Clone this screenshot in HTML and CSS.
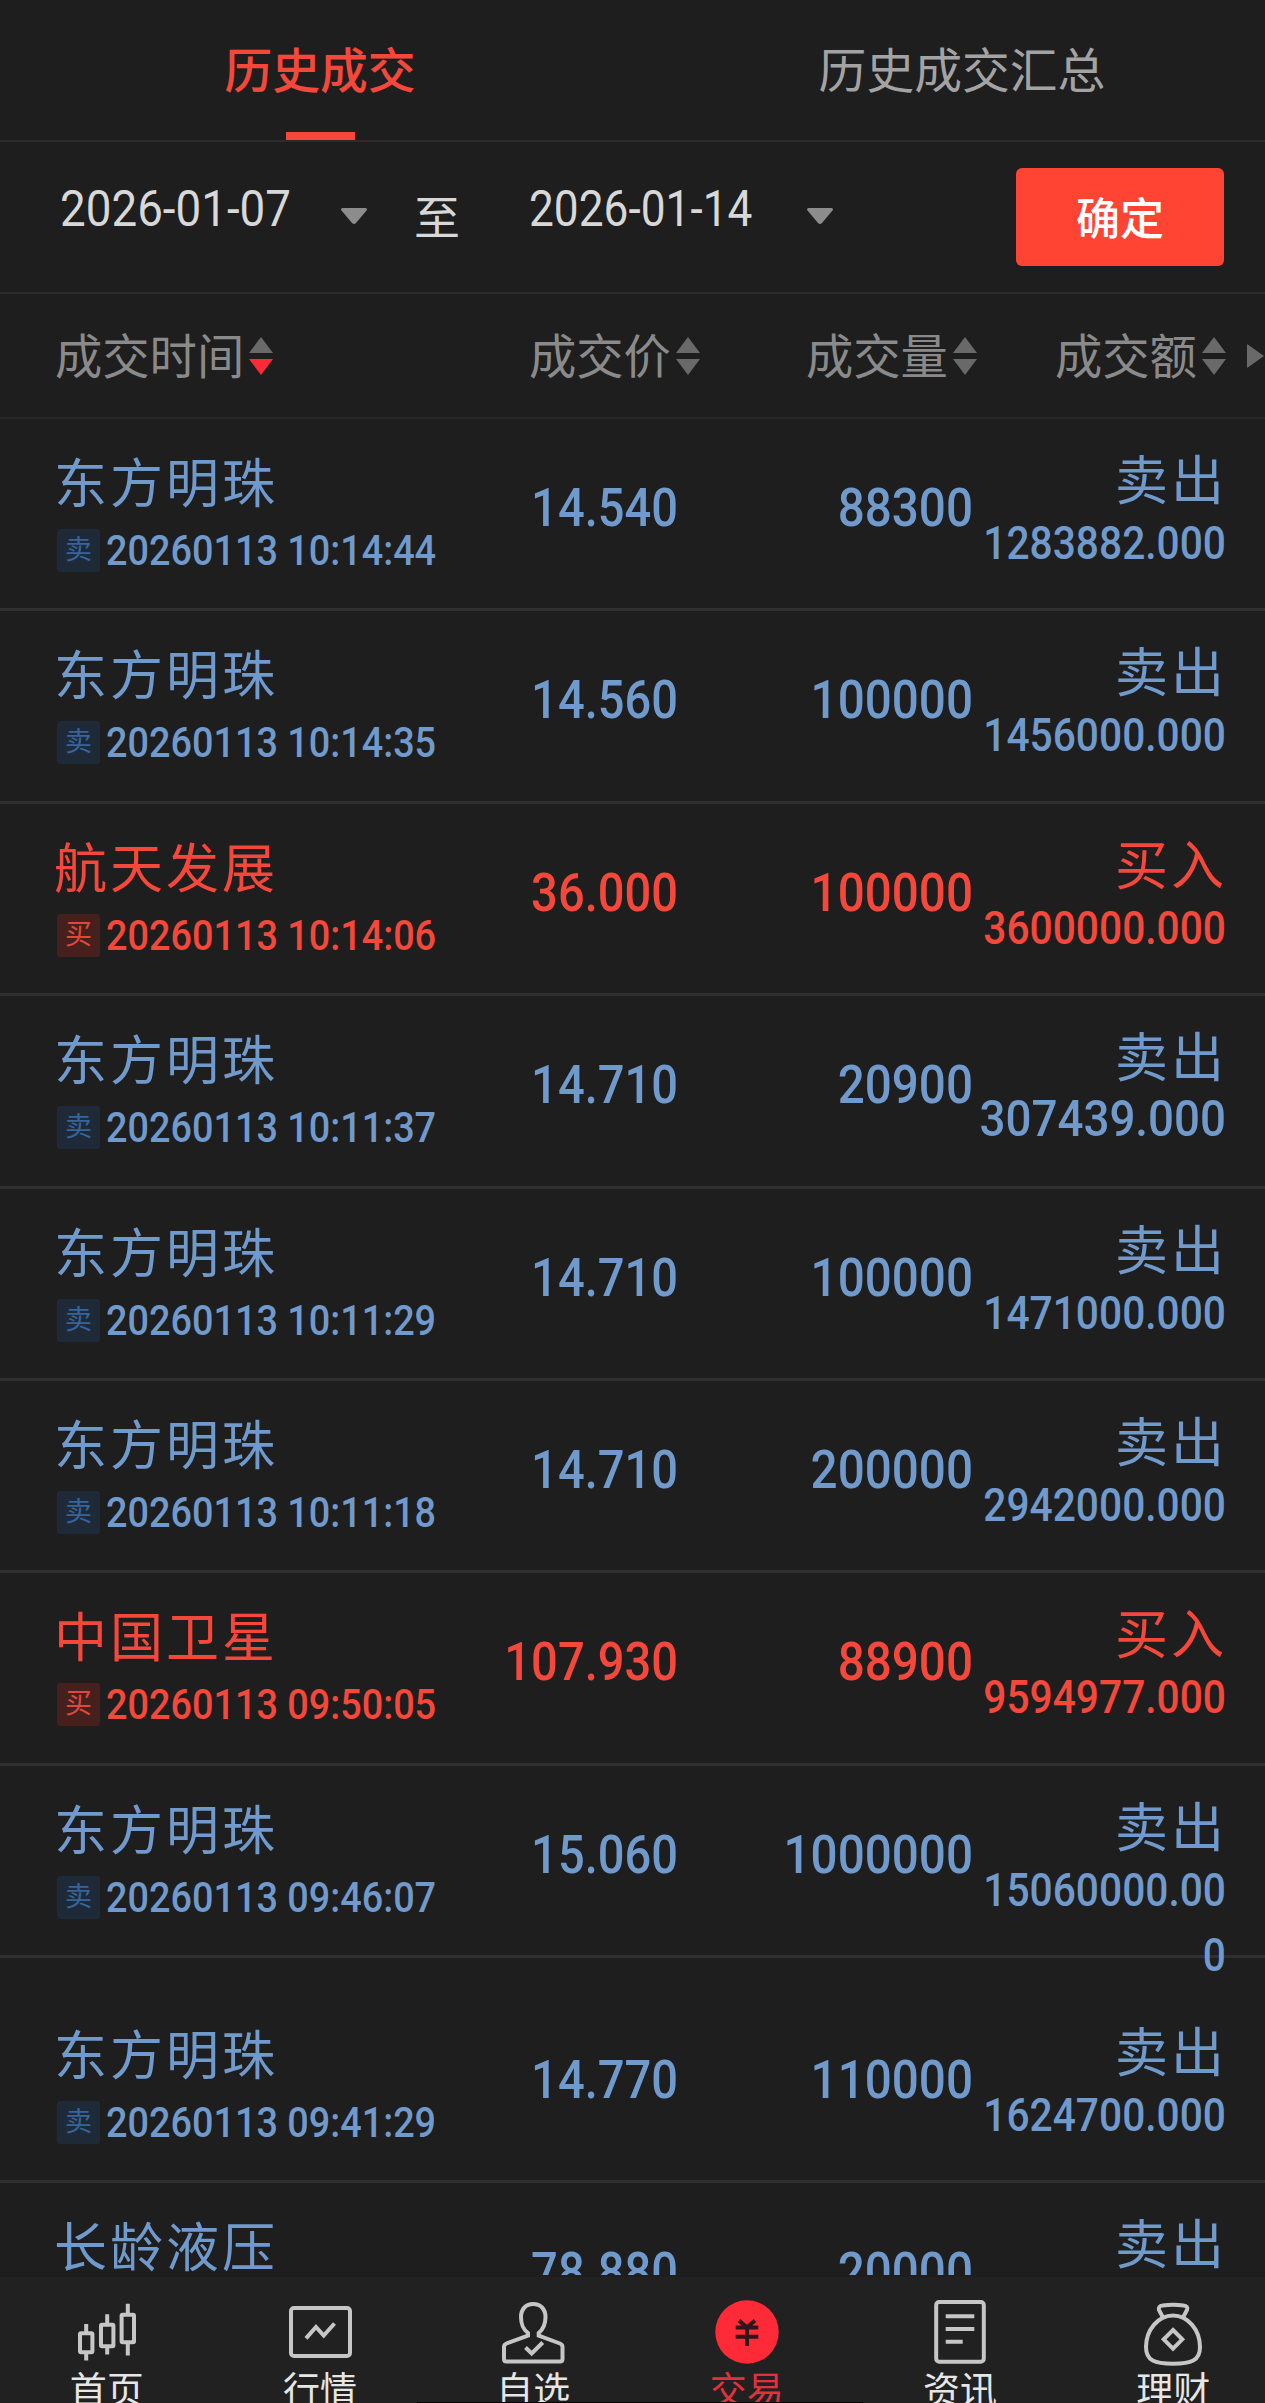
FILE: index.html
```html
<!DOCTYPE html>
<html lang="zh-CN">
  <head>
    <meta charset="utf-8">
    <meta name="viewport" content="width=device-width, initial-scale=1.0">
    <title>历史成交</title>
    <link rel="stylesheet" href="styles.css">
  </head>
  <body>
    <div class="tabs">
      <div class="tab active">历史成交</div>
      <div class="tab">历史成交汇总</div>
    </div>

    <div class="filter">
      <div class="date"><span class="date-text">2026-01-07</span></div>
      <svg class="caret" viewBox="0 0 28 18"><path d="M3 1h22q3 0 1.500 2.500L16 16q-2 2-4 0L1.500 3.500Q0 1 3 1z"/></svg>
      <span class="to">至</span>
      <div class="date second"><span class="date-text">2026-01-14</span></div>
      <svg class="caret" viewBox="0 0 28 18"><path d="M3 1h22q3 0 1.500 2.500L16 16q-2 2-4 0L1.500 3.500Q0 1 3 1z"/></svg>
      <button class="confirm">确定</button>
    </div>

    <div class="head">
      <div class="th"><span class="label">成交时间</span><span class="sort desc"></span></div>
      <div class="th"><span class="label">成交价</span><span class="sort"></span></div>
      <div class="th"><span class="label">成交量</span><span class="sort"></span></div>
      <div class="th"><span class="label">成交额</span><span class="sort"></span><span class="more"></span></div>
    </div>

    <div class="list" id="list"></div>

    <div class="nav">
      <div class="nav-item">
        <svg viewBox="0 0 70 70">
          <rect x="8" y="37.300" width="12.400" height="19" rx="1"/>
          <rect x="29" y="28.700" width="12.400" height="21.600" rx="1"/>
          <rect x="49.600" y="18.700" width="12.400" height="27.600" rx="1"/>
          <path d="M14.200 28v9M14.200 56.500v8M35.200 18.300v10M35.200 50.500v8M55.800 7.700v11M55.800 46.500v13"/>
        </svg>
        首页
      </div>
      <div class="nav-item">
        <svg viewBox="0 0 70 70">
          <rect x="6" y="12" width="59" height="48" rx="3"/>
          <path d="M21 42.300L31 31l7.700 8.500L49.500 27.500"/>
        </svg>
        行情
      </div>
      <div class="nav-item">
        <svg viewBox="0 0 70 70">
          <path d="M30 37C25 33 23 29 23 21 23 13 28 8 35.200 8S47.500 13 47.500 21C47.500 29 45.500 33 40.700 37V39.500L62 47.500Q64.500 48.500 64.500 51V63Q64.500 65.500 62 65.500H8.500Q6 65.500 6 63V51Q6 48.500 8.500 47.500L30 39.500z"/>
          <path d="M27.500 51.500l6.200 6 11-11"/>
        </svg>
        自选
      </div>
      <div class="nav-item current">
        <svg viewBox="0 0 70 70">
          <circle cx="35" cy="36" r="31.700"/>
          <path d="M27 24.500l8 7 8-7M23.700 31.500h22.600M23.700 40.700h22.600M35 31v19"/>
        </svg>
        交易
      </div>
      <div class="nav-item">
        <svg viewBox="0 0 70 70">
          <rect x="11.200" y="6" width="47.600" height="59.700" rx="3"/>
          <path d="M20.700 20.300h28.600M20.700 33h28.600M20.700 45.700h17"/>
        </svg>
        资讯
      </div>
      <div class="nav-item">
        <svg viewBox="0 0 70 70">
          <path d="M25 21.500L21 14Q20 10 24.500 9.500 35 8 45.500 9.500 50.500 10 49 14L45 21.500"/>
          <path d="M35 19.500C20 19.500 8 34 8 51 8 65 17 67.700 35 67.700S62 65 62 51C62 34 50 19.500 35 19.500z"/>
          <path d="M35 34l9.300 9.300L35 52.600l-9.300-9.300z"/>
        </svg>
        理财
      </div>
    </div>
    <div class="home-bar"></div>

    <script>

      // name, side, time, price, volume, amount
      var trades = [
        ["东方明珠", "sell", "20260113 10:14:44", "14.540", "88300", "1283882.000"],
        ["东方明珠", "sell", "20260113 10:14:35", "14.560", "100000", "1456000.000"],
        ["航天发展", "buy", "20260113 10:14:06", "36.000", "100000", "3600000.000"],
        ["东方明珠", "sell", "20260113 10:11:37", "14.710", "20900", "307439.000"],
        ["东方明珠", "sell", "20260113 10:11:29", "14.710", "100000", "1471000.000"],
        ["东方明珠", "sell", "20260113 10:11:18", "14.710", "200000", "2942000.000"],
        ["中国卫星", "buy", "20260113 09:50:05", "107.930", "88900", "9594977.000"],
        ["东方明珠", "sell", "20260113 09:46:07", "15.060", "1000000", "15060000.000"],
        ["东方明珠", "sell", "20260113 09:41:29", "14.770", "110000", "1624700.000"],
        ["长龄液压", "sell", "", "78.880", "20000", ""]
      ];

      var html = "";
      for (var i = 0; i < trades.length; i++) {
        var t = trades[i];
        var sell = t[1] == "sell";
        var cls = "row " + t[1];

        // A wrapped amount pushes the next row down
        if (i > 0 && trades[i - 1][5].length > 11) {
          cls += " pushed";
        }

        html += '<div class="' + cls + '">' +
          '<div><div class="name">' + t[0] + '</div>';
        if (t[2] != "") {
          html += '<div class="meta"><span class="badge">' + (sell ? "卖" : "买") + '</span><span class="time">' + t[2] + '</span></div>';
        }
        html += '</div>' +
          '<div class="num price">' + t[3] + '</div>' +
          '<div class="num">' + t[4] + '</div>' +
          '<div class="total"><div class="side">' + (sell ? "卖出" : "买入") + '</div>' +
          '<div class="amount' + (t[5].length < 11 ? " large" : "") + '">' + t[5] + '</div></div>' +
          '</div>';
      }
      document.getElementById("list").innerHTML = html;

    </script>
  </body>
</html>
```
FILE: styles.css
```css
* {
  box-sizing: border-box;
}

body {
  margin: 0;
  height: 2403px;
  overflow: hidden;
  position: relative;
  background-color: #1e1e1e;
  font-family: Roboto, "Noto Sans CJK SC", sans-serif;
}

.tabs {
  display: flex;
  height: 142px;
  border-bottom: 2px solid #2c2c2c;
}

.tab {
  flex: 1 0 0;
  padding-left: 22px;
  line-height: 145px;
  text-align: center;
  font-size: 47.800px;
  color: #a3a3a3;
}

.tab.active {
  position: relative;
  flex: none;
  width: 637px;
  padding-left: 3px;
  font-weight: 500;
  color: #f5483a;
}

.tab.active::after {
  content: "";
  position: absolute;
  left: 286px;
  bottom: 0;
  width: 69px;
  height: 8px;
  background-color: #f5483a;
}

.filter {
  display: flex;
  align-items: center;
  height: 152px;
  padding: 0 41px 0 60px;
  border-bottom: 2px solid #2c2c2c;
  color: #d8d8d8;
}

.date {
  width: 280px;
  padding-bottom: 16px;
}

.date.second {
  width: 277px;
}

.date-text {
  display: inline-block;
  font-size: 50px;
  font-weight: 400;
  transform: scaleX(0.915);
  transform-origin: left;
}

.second .date-text {
  transform: scaleX(0.885);
}

.caret {
  width: 28px;
  height: 18px;
  margin-bottom: 2px;
  fill: #8c8c8c;
}

.to {
  width: 161px;
  padding: 0 0 7px 46px;
  font-size: 46px;
}

.confirm {
  width: 208px;
  height: 98px;
  margin-left: auto;
  padding: 0 0 3px;
  border: none;
  border-radius: 6px;
  background-color: #ff4433;
  color: #fff;
  font-family: inherit;
  font-size: 44px;
  font-weight: 500;
}

.head {
  display: grid;
  grid-template-columns: 474px 277px 249px auto;
  height: 125px;
  padding-left: 55px;
  border-bottom: 2px solid #282828;
}

.th {
  display: flex;
  align-items: center;
  font-size: 47.300px;
  color: #8a8a8a;
}

.label {
  padding-bottom: 5px;
}

.sort {
  display: flex;
  flex-direction: column;
  gap: 6px;
  margin-left: 5px;
}

.sort::before,
.sort::after {
  content: "";
  border: 12px solid transparent;
}

.sort::before {
  border-top: none;
  border-bottom: 16px solid #696969;
}

.sort::after {
  border-bottom: none;
  border-top: 16px solid #696969;
}

.sort.desc::after {
  border-top-color: #ff2a37;
}

.more {
  margin-left: 21px;
  border: 12px solid transparent;
  border-left: 17px solid #696969;
  border-right: none;
}

.list {
  height: 1856px;
  overflow: hidden;
}

.row {
  display: grid;
  grid-template-columns: 402px 222px 295px 253px;
  height: 192.400px;
  padding: 36px 38px 0 54px;
  border-bottom: 3px solid #303030;
}

.row.pushed {
  height: 225px;
  padding-top: 69px;
}

.sell {
  color: #7099cc;
}

.buy {
  color: #f5483a;
}

.name,
.side {
  height: 60px;
  line-height: 60px;
  font-size: 53px;
  letter-spacing: 3px;
}

.name {
  margin-bottom: 14px;
}

.meta {
  display: flex;
  align-items: center;
  height: 43px;
  padding-left: 3px;
}

.badge {
  flex-shrink: 0;
  width: 43px;
  height: 43px;
  margin-right: 6px;
  border-radius: 3px;
  line-height: 42px;
  text-align: center;
  font-size: 27px;
}

.sell .badge {
  background-color: #1f2a38;
  color: #36659b;
}

.buy .badge {
  background-color: #46201d;
  color: #e0483c;
}

.time {
  font-size: 42px;
  font-weight: 500;
  white-space: nowrap;
  transform: scaleX(0.9);
  transform-origin: left;
}

.num {
  margin-top: 23px;
  line-height: 60px;
  text-align: right;
  font-size: 53.500px;
  font-weight: 500;
  transform: scaleX(0.89);
  transform-origin: right;
}

.num.price {
  transform: scaleX(0.88);
}

.total {
  display: flex;
  flex-direction: column;
  align-items: flex-end;
  margin-top: -3px;
}

.side {
  margin-right: -1px;
}

.amount {
  width: 280px;
  margin-top: -1px;
  line-height: 65px;
  text-align: right;
  font-size: 46px;
  font-weight: 500;
  overflow-wrap: anywhere;
  transform: scaleX(0.885);
  transform-origin: right;
}

.amount.large {
  font-size: 50.500px;
  line-height: 62px;
  transform: scaleX(0.905);
}

.nav {
  display: flex;
  width: 1280px;
  height: 128px;
  margin-top: 2px;
  padding-top: 19px;
  background-color: #212121;
}

.nav-item {
  flex: 1;
  display: flex;
  flex-direction: column;
  align-items: center;
  line-height: 52px;
  font-size: 37px;
  color: #e6e6e6;
}

.nav-item svg {
  flex-shrink: 0;
  width: 70px;
  height: 70px;
  fill: none;
  stroke: #c6c6c6;
  stroke-width: 4;
}

.nav-item.current {
  color: #e0323c;
}

.nav-item.current circle {
  fill: #ff2a37;
  stroke: none;
}

.nav-item.current path {
  stroke: #30161a;
}

.home-bar {
  position: absolute;
  left: 417px;
  bottom: 0;
  width: 446px;
  height: 1px;
  background-color: #050505;
}
```
